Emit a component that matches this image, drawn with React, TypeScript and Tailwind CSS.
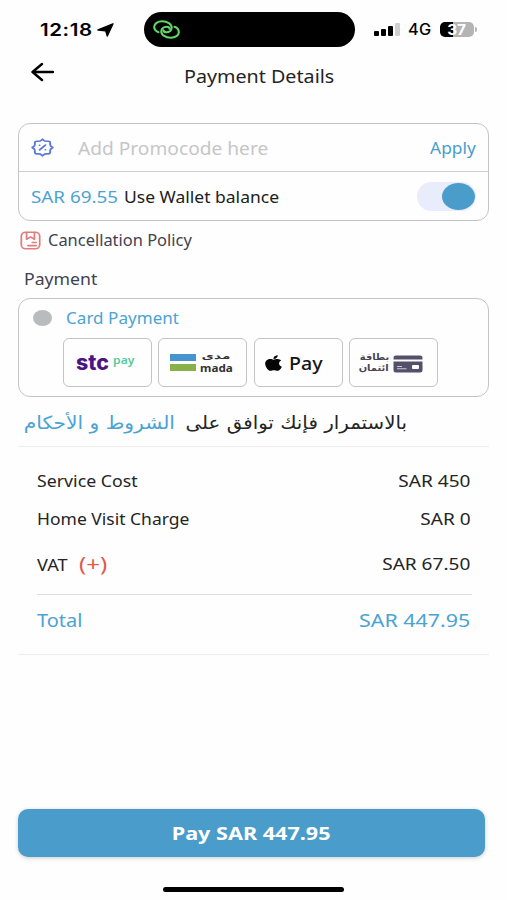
import type { ReactNode } from "react";

const RING = "M5.500 12.200C2.800 11.200 1.200 9.300 1.200 6.800 1.200 3.500 4.700 1.200 9.200 1.200c5.200 0 9.500 2.700 9.500 6.400 0 2.700-2.400 4.700-5.400 4.700-1.700 0-2.800-.8-2.900-2.100";

function Promo() {
  return (
    <svg viewBox="0 0 24 24" preserveAspectRatio="none" className="h-[19px] w-[23px]" fill="none" stroke="#5b79dc" strokeWidth="2" strokeLinejoin="round" strokeLinecap="round">
      <path d="M12 1.500Q14 4 15.500 4H18Q20 4 20 6v2.500Q20 10 22.700 12 20 14 20 15.500V18q0 2-2 2h-2.500Q14 20 12 22.500 10 20 8.500 20H6q-2 0-2-2v-2.500Q4 14 1.300 12 4 10 4 8.500V6q0-2 2-2h2.500Q10 4 12 1.500z" />
      <path d="m9 15 6-6M8.900 9.200h.1M15 14.800h.1" />
    </svg>
  );
}

function Policy() {
  return (
    <svg viewBox="0 0 24 24" preserveAspectRatio="none" className="h-[19px] w-[21px]" fill="none" stroke="#e27d7d" strokeWidth="2" strokeLinejoin="round" strokeLinecap="round">
      <rect x="1.500" y="1.500" width="21" height="21" rx="5" />
      <path d="M7.500 2v8.500l4.500-3 4.500 3V2M14 14.500h4.500M9 18.500h9.500" />
    </svg>
  );
}

function Chain() {
  return (
    <svg viewBox="0 0 27 19" className="h-[19px] w-[27px]" fill="none" stroke="#62d869" strokeWidth="2.100" strokeLinecap="round">
      <path d={RING} />
      <path transform="rotate(180 13.500 9.500)" d={RING} />
    </svg>
  );
}

function Apple() {
  return (
    <svg viewBox="0 28 384 456" preserveAspectRatio="none" className="h-[16px] w-[17px]" fill="#050505">
      <path d="M318.700 268.700c-.2-36.700 16.400-64.400 50-84.800-18.800-26.900-47.200-41.700-84.700-44.600-35.500-2.800-74.300 20.700-88.500 20.700-15 0-49.400-19.700-76.400-19.700C63.300 141.200 4 184.800 4 273.500q0 39.300 14.400 81.200c12.800 36.700 59 126.700 107.200 125.200 25.200-.6 43-17.900 75.800-17.900 31.800 0 48.300 17.900 76.400 17.900 48.600-.7 90.400-82.500 102.600-119.300-65.200-30.700-61.700-90-61.700-91.900zM262.100 104.500c27.300-32.400 24.800-61.900 24-72.500-24.100 1.400-52 16.400-67.900 34.900-17.500 19.800-27.800 44.300-25.600 71.900 26.100 2 49.900-11.400 69.500-34.300z" />
    </svg>
  );
}

function CreditCard() {
  return (
    <svg viewBox="0 0 30 18" className="h-[18px] w-[30px]">
      <path d="M3 .5h24q2.500 0 2.500 2.500v1.500H.5V3Q.5.5 3 .5zM.5 6.500h29V15q0 2.500-2.500 2.500H3Q.5 17.500.5 15z" fill="#55506a" />
      <rect x="19" y="10" width="7" height="4" rx="1" fill="#fff" />
      <path d="M4 11.500h5M4 13.700h9.500" stroke="#c9c6d2" strokeWidth="1.100" />
    </svg>
  );
}

function Tile({ children, className }: { children: ReactNode; className: string }) {
  return (
    <div className={`flex h-[49px] w-[89px] items-center rounded-[6px] border border-[#c3c3c3] ${className}`}>
      {children}
    </div>
  );
}

function Row({ label, value, className }: { label: ReactNode; value: string; className: string }) {
  return (
    <div className={`flex items-center justify-between ${className}`}>
      <span className="flex items-center">{label}</span>
      <span className="mr-[1.500px] origin-right scale-x-[1.155]">{value}</span>
    </div>
  );
}

export default function App() {
  return (
    <div className="flex h-[900px] w-[507px] flex-col overflow-hidden bg-[#fefefe] font-['Noto_Sans','DejaVu_Sans',sans-serif] leading-none whitespace-nowrap text-[#242424]">
      <div className="flex h-[59px] items-center pl-[40px] font-['Inter',sans-serif] text-black">
        <span className="w-[57px] origin-left scale-x-[1.17] text-[17.500px] font-semibold tracking-[0.500px]">12:18</span>
        <svg viewBox="0 0 17 14" className="h-[14px] w-[17px]">
          <path d="M16 .8 10.300 13 8.700 7.700 1 7z" fill="#000" stroke="#000" strokeWidth="1.400" strokeLinejoin="round" />
        </svg>
        <div className="ml-[30px] flex h-[35px] w-[211px] items-center rounded-full bg-black pl-[9px]">
          <Chain />
        </div>
        <div className="ml-[19px] flex h-[13px] items-end gap-[2px]">
          <i className="h-[5px] w-[5px] rounded-[1px] bg-black" />
          <i className="h-[7px] w-[5px] rounded-[1px] bg-black" />
          <i className="h-[10px] w-[5px] rounded-[1px] bg-black" />
          <i className="h-[13px] w-[5px] rounded-[1px] bg-[#d0d0d0]" />
        </div>
        <span className="ml-[8px] w-[32px] origin-left scale-x-[1.05] text-[15.500px] font-medium tracking-[0.300px]">4G</span>
        <div className="flex h-[15px] w-[34px] items-center justify-center rounded-[5px] bg-[linear-gradient(90deg,#000_37%,#b4b4b4_37%)] text-[14px] font-bold text-white">
          <span className="scale-x-[1.1]">37</span>
        </div>
        <i className="ml-[1px] h-[5px] w-[2px] rounded-r-full bg-[#b4b4b4]" />
      </div>

      <div className="flex h-[64px] items-start">
        <svg viewBox="0 0 24 20" className="mt-[3px] ml-[30px] h-[20px] w-[24px]" fill="none" stroke="#000" strokeWidth="2.400" strokeLinecap="round" strokeLinejoin="round">
          <path d="M12 2 2.500 10l9.500 8M2.500 10H23" />
        </svg>
        <h1 className="mt-[7px] ml-[130px] origin-left scale-x-[1.065] text-[18.500px] leading-[20px]">Payment Details</h1>
      </div>

      <div className="mx-[18px] h-[98px] w-[471px] rounded-[12px] border border-[#c4c4c4]">
        <div className="flex h-[48px] items-center border-b border-[#cfcfcf] pr-[12px] pl-[12px]">
          <Promo />
          <span className="mt-px ml-[24px] origin-left scale-x-[1.035] text-[18.500px] text-[#c6c6c6]">Add Promocode here</span>
          <span className="ml-auto origin-right scale-x-[1.02] text-[17px] text-[#4a9dcb]">Apply</span>
        </div>
        <div className="flex h-[48px] items-center pr-[12px] pl-[12px] pt-px text-[16.500px]">
          <span className="mt-px w-[92.500px] origin-left scale-x-[1.14] text-[#4ba3d3]">SAR 69.55</span>
          <span className="mt-px origin-left scale-x-[1.06] text-[#202020]">Use Wallet balance</span>
          <div className="ml-auto flex h-[29px] w-[59px] items-center justify-end rounded-full bg-[#e9ecfa] pr-[1px]">
            <i className="h-[27px] w-[33px] rounded-[50%] bg-[#4a9dcb]" />
          </div>
        </div>
      </div>

      <div className="flex h-[39px] items-center pl-[20px] text-[15.500px] text-[#3f4350]">
        <Policy />
        <span className="ml-[7px] origin-left scale-x-[1.06]">Cancellation Policy</span>
      </div>
      <div className="flex h-[38px] items-center pl-[24px] text-[16.500px] text-[#3f4350]">
        <span className="mt-px origin-left scale-x-[1.07]">Payment</span>
      </div>

      <div className="mx-[18px] h-[99px] w-[471px] rounded-[12px] border border-[#c4c4c4]">
        <div className="flex h-[39px] items-center pb-px pl-[14px]">
          <i className="h-[16px] w-[19px] rounded-[50%] bg-[#b9bcbd]" />
          <span className="-mt-px ml-[14px] text-[17px] tracking-[0.050px] text-[#4ba3d3]">Card Payment</span>
        </div>
        <div className="flex gap-[6.500px] pl-[43.500px]">
          <Tile className="pl-[12px]">
            <span className="mt-[1px] w-[37px] origin-left scale-x-[1.04] font-['Inter',sans-serif] text-[20.500px] font-extrabold text-[#4b1583]">stc</span>
            <span className="mb-[5px] origin-left scale-x-[1.06] text-[11.500px] font-semibold text-[#55cb9b]">pay</span>
          </Tile>
          <Tile className="pl-[11px]">
            <span className="flex flex-col gap-[3px]">
              <i className="h-[7px] w-[26px] bg-[#4694cf]" />
              <i className="h-[7px] w-[26px] bg-[#8ab04a]" />
            </span>
            <span className="ml-[4px] flex w-[32px] flex-col items-center font-bold text-[#333]">
              <span className="h-[10px] scale-x-[1.6] font-['DejaVu_Sans',sans-serif] text-[8.500px] leading-[8px]">مدى</span>
              <span className="h-[11px] scale-x-[1.06] text-[11px] leading-[11px]">mada</span>
            </span>
          </Tile>
          <Tile className="pl-[10px]">
            <Apple />
            <span className="ml-[7px] origin-left scale-x-[1.09] text-[18px] font-medium text-[#151515]">Pay</span>
          </Tile>
          <Tile className="pl-[9px]">
            <span className="flex w-[30px] flex-col items-center font-['DejaVu_Sans',sans-serif] text-[9px] leading-[10.500px] font-bold text-[#484452]">
              <span className="scale-x-[1.1]">بطاقة</span>
              <span className="scale-x-[1.1]">ائتمان</span>
            </span>
            <span className="ml-[4px] mt-[2px]"><CreditCard /></span>
          </Tile>
        </div>
      </div>

      <div dir="rtl" className="mx-[18px] flex h-[50px] items-center border-b border-[#ededed] pt-[3px] pr-[82px] font-['DejaVu_Sans',sans-serif] text-[18px]">
        <span className="w-[232px] origin-right scale-x-[1.1]">بالاستمرار فإنك توافق على</span>
        <span className="origin-right scale-x-[1.12] text-[#4ba3d3]">الشروط و الأحكام</span>
      </div>

      <div className="mx-[18px] h-[208px] border-b border-[#ededed] pt-[15px] pr-[17px] pl-[18.500px] text-[16.500px]">
        <Row label={<span className="origin-left scale-x-[1.075]">Service Cost</span>} value="SAR 450" className="h-[38px]" />
        <Row label={<span className="origin-left scale-x-[1.06]">Home Visit Charge</span>} value="SAR 0" className="h-[38px]" />
        <Row
          label={
            <>
              <span className="mt-[3px] w-[42px] origin-left scale-x-[1.1]">VAT</span>
              <span className="origin-left scale-x-[1.2] text-[20px] text-[#df5a4c]">(+)</span>
            </>
          }
          value="SAR 67.50"
          className="h-[57px] border-b border-[#dedede] pb-[4px]"
        />
        <Row label={<span className="origin-left scale-x-[1.08]">Total</span>} value="SAR 447.95" className="h-[50px] text-[18.500px] text-[#4ba3d3]" />
      </div>

      <div className="mt-auto flex flex-col pb-[8px]">
        <button className="ml-[18px] flex h-[48px] w-[467px] items-center justify-center rounded-[10px] bg-[#4a9dcb] text-[18px] font-bold text-white shadow-[0_1px_4px_rgba(0,0,0,0.2)]">
          <span className="scale-x-[1.2]">Pay SAR 447.95</span>
        </button>
        <i className="mt-[30px] ml-[163px] h-[5px] w-[181px] rounded-full bg-black" />
      </div>
    </div>
  );
}
